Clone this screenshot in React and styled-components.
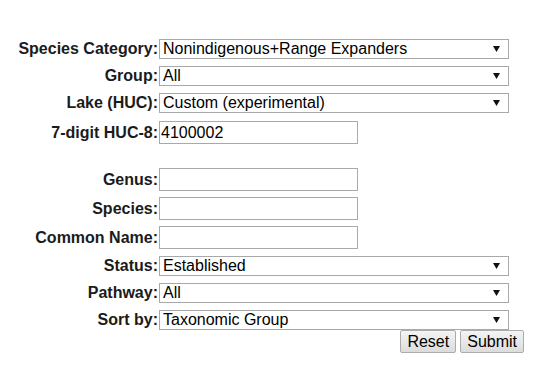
import React, { useState } from "react";
import styled, { createGlobalStyle } from "styled-components";

const GlobalStyle = createGlobalStyle`
  html, body {
    margin: 0;
    padding: 0;
    background: #ffffff;
  }
  body {
    font-family: "Liberation Sans", Arial, sans-serif;
    font-size: 16px;
    color: #000;
  }
`;

const Form = styled.form`
  display: flex;
  flex-direction: column;
  padding: 39px 0 0 8px;
  width: 516px;
`;

const Row = styled.div`
  display: grid;
  grid-template-columns: 150px 1fr;
  column-gap: 1px;
  align-items: center;
  margin-top: ${(p) => p.$top || 0}px;
`;

const Label = styled.label`
  text-align: right;
  font-weight: bold;
  line-height: 20px;
  white-space: nowrap;
  color: #1b1b1b;
`;

const SelectWrap = styled.div`
  position: relative;
  width: 350px;
  height: 20px;
`;

const Select = styled.select`
  appearance: none;
  -webkit-appearance: none;
  width: 100%;
  height: 20px;
  box-sizing: border-box;
  border: 1px solid #a9a9a9;
  border-radius: 0;
  background: #fff;
  padding: 0 20px 0 3px;
  margin: 0;
  font-family: inherit;
  font-size: 16px;
  line-height: 18px;
  color: #000;
  outline: none;
`;

const Arrow = styled.svg`
  position: absolute;
  right: 9px;
  top: 7px;
  pointer-events: none;
`;

const TextInput = styled.input`
  width: 199px;
  height: 23px;
  box-sizing: border-box;
  border: 1px solid #a9a9a9;
  padding: 0 1px;
  margin: 0;
  font-family: inherit;
  font-size: 16px;
  color: #000;
  outline: none;
`;

const Buttons = styled.div`
  display: flex;
  justify-content: flex-end;
  gap: 4px;
  margin-top: 0;
`;

const Button = styled.button`
  height: 23px;
  padding: 0 6px;
  box-sizing: border-box;
  border: 1px solid #acacac;
  border-radius: 2px;
  background: linear-gradient(#f4f4f4, #dcdcdc);
  font-family: inherit;
  font-size: 16px;
  line-height: 20px;
  color: #000;
  cursor: pointer;
`;

const Dropdown = ({ value, options }) => (
  <SelectWrap>
    <Select defaultValue={value}>
      {options.map((o) => (
        <option key={o}>{o}</option>
      ))}
    </Select>
    <Arrow width="7" height="6" viewBox="0 0 7 6">
      <path d="M0 0 H7 L3.5 6 Z" fill="#111" />
    </Arrow>
  </SelectWrap>
);

const App = () => {
  const [huc, setHuc] = useState("4100002");
  return (
    <>
      <GlobalStyle />
      <Form onSubmit={(e) => e.preventDefault()}>
        <Row>
          <Label>Species Category:</Label>
          <Dropdown
            value="Nonindigenous+Range Expanders"
            options={["Nonindigenous", "Nonindigenous+Range Expanders", "All"]}
          />
        </Row>
        <Row $top={7}>
          <Label>Group:</Label>
          <Dropdown value="All" options={["All", "Fishes", "Mollusks", "Plants"]} />
        </Row>
        <Row $top={7}>
          <Label>Lake (HUC):</Label>
          <Dropdown
            value="Custom (experimental)"
            options={["Custom (experimental)", "Lake Erie", "Lake Huron"]}
          />
        </Row>
        <Row $top={8}>
          <Label>7-digit HUC-8:</Label>
          <TextInput value={huc} onChange={(e) => setHuc(e.target.value)} />
        </Row>
        <Row $top={24}>
          <Label>Genus:</Label>
          <TextInput />
        </Row>
        <Row $top={6}>
          <Label>Species:</Label>
          <TextInput />
        </Row>
        <Row $top={6}>
          <Label>Common Name:</Label>
          <TextInput />
        </Row>
        <Row $top={7}>
          <Label>Status:</Label>
          <Dropdown value="Established" options={["Established", "All"]} />
        </Row>
        <Row $top={7}>
          <Label>Pathway:</Label>
          <Dropdown value="All" options={["All", "Shipping", "Stocking"]} />
        </Row>
        <Row $top={7}>
          <Label>Sort by:</Label>
          <Dropdown
            value="Taxonomic Group"
            options={["Taxonomic Group", "Scientific Name", "Common Name"]}
          />
        </Row>
        <Buttons>
          <Button type="reset">Reset</Button>
          <Button type="submit">Submit</Button>
        </Buttons>
      </Form>
    </>
  );
};

export default App;
